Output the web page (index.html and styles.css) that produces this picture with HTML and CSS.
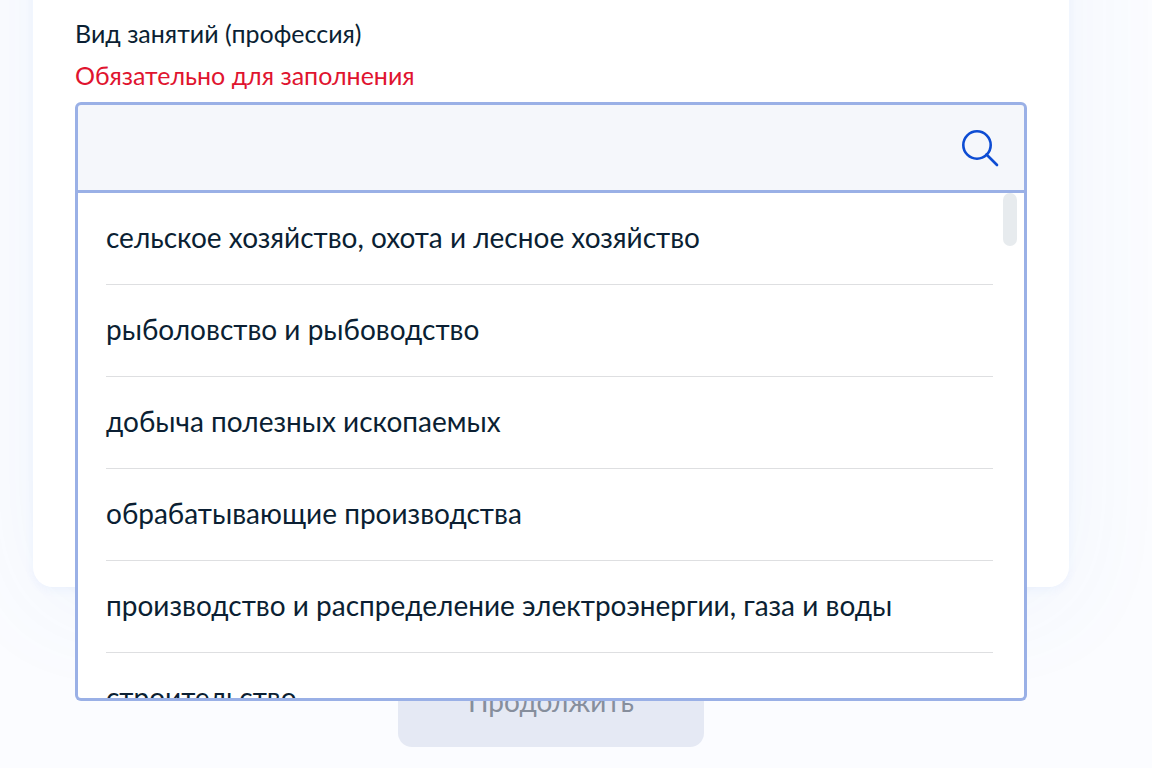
FILE: index.html
```html
<!DOCTYPE html>
<html lang="ru">
<head>
<meta charset="utf-8">
<meta name="viewport" content="width=device-width, initial-scale=1">
<title>Вид занятий</title>
<link rel="stylesheet" href="styles.css">
</head>
<body>
<main class="page">
  <section class="card">
    <label class="label" for="occupation">Вид занятий (профессия)</label>
    <p class="error" id="occupation-error">Обязательно для заполнения</p>
    <div class="combo">
      <div class="field">
        <input class="input" id="occupation" type="text" role="combobox" aria-expanded="true" aria-controls="options" aria-describedby="occupation-error" autocomplete="off">
        <button class="search" type="button" aria-label="Поиск">
          <svg class="icon" viewBox="0 0 40 40" aria-hidden="true"><circle cx="17" cy="17" r="13.7"/><path d="M26.5 26.5L37 37"/></svg>
        </button>
      </div>
      <div class="menu">
        <ul class="options" id="options" role="listbox">
          <li class="option" role="option">сельское хозяйство, охота и лесное хозяйство</li>
          <li class="option" role="option">рыболовство и рыбоводство</li>
          <li class="option" role="option">добыча полезных ископаемых</li>
          <li class="option" role="option">обрабатывающие производства</li>
          <li class="option" role="option">производство и распределение электроэнергии, газа и воды</li>
          <li class="option" role="option">строительство</li>
        </ul>
        <span class="thumb"></span>
      </div>
    </div>
  </section>
  <button class="submit" type="button" disabled>Продолжить</button>
</main>
</body>
</html>
```

FILE: styles.css
```css
* {
  box-sizing: border-box;
}

body {
  margin: 0;
  background: #fbfcff;
  color: #0b1f33;
  font-family: Lato, "Liberation Sans", sans-serif;
}

.page {
  display: flex;
  flex-direction: column;
  align-items: center;
  height: 100vh;
  padding: 0 83px 0 33px;
  overflow: hidden;
}

/* The top of the card is scrolled out of view. */
.card {
  width: 100%;
  min-height: 787px;
  flex-shrink: 0;
  margin-top: -200px;
  padding: 217px 42px 0;
  background: #fff;
  border-radius: 20px;
  box-shadow: 0 3px 10px rgba(70, 120, 230, 0.06), 0 20px 110px rgba(70, 130, 210, 0.06);
}

.label,
.error {
  display: block;
  margin: 0;
  font-size: 25px;
  line-height: 32px;
}

.error {
  margin: 10px 0 11px;
  color: #e0142f;
}

.combo {
  position: relative;
}

.field {
  display: flex;
  align-items: center;
  height: 91px;
  padding: 0 24px 0 28px;
  background: #f5f7fb;
  border: 3px solid #9ab0e6;
  border-radius: 6px 6px 0 0;
}

.input {
  flex: 1;
  min-width: 0;
  padding: 0;
  border: 0;
  outline: 0;
  background: transparent;
  color: inherit;
  font: inherit;
  font-size: 28px;
}

.search {
  display: flex;
  padding: 0;
  border: 0;
  background: none;
}

.icon {
  width: 40px;
  height: 40px;
  fill: none;
  stroke: #0d4cd3;
  stroke-width: 2.6;
  stroke-linecap: round;
}

.menu {
  position: absolute;
  top: 100%;
  left: 0;
  right: 0;
  z-index: 1;
  height: 508px;
  overflow: hidden;
  background: #fff;
  border: 3px solid #9ab0e6;
  border-top: 0;
  border-radius: 0 0 6px 6px;
}

.options {
  margin: 0;
  padding: 0 31px 0 28px;
  list-style: none;
}

.option {
  padding: 26px 0 29px;
  border-bottom: 1px solid #dedfe1;
  font-size: 28px;
  line-height: 36px;
}

.thumb {
  position: absolute;
  top: 0;
  right: 7px;
  width: 14px;
  height: 53px;
  border-radius: 7px;
  background: #e7ebee;
}

.submit {
  flex-shrink: 0;
  margin-top: 72px;
  padding: 24px 70px 28px;
  border: 0;
  border-radius: 14px;
  background: #e5e9f4;
  color: #868e9c;
  font: inherit;
  font-size: 28px;
  line-height: 36px;
}
```
